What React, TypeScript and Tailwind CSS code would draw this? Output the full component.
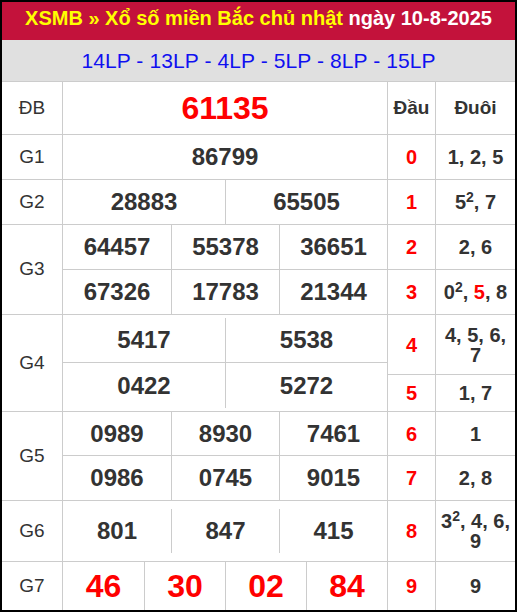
import React from 'react'

// bảng kết quả xổ số miền Bắc
const line = 'border-[#cccccc]'
const cell = `border-r border-b ${line}`

const Label = ({ text, span }: { text: string; span?: boolean }) => (
  <div className={`${cell} ${span ? 'row-span-2' : ''} flex items-center justify-center text-[19px] text-[#333]`}>
    {text}
  </div>
)

const Head = ({ d }: { d: string }) => (
  <div className={`${cell} flex items-center justify-center text-[20px] font-bold text-[#ff0000]`}>{d}</div>
)

const Tail = ({ children, last }: { children: React.ReactNode; last?: boolean }) => (
  <div className={`${last ? '' : 'border-b'} ${line} flex items-center justify-center px-[4px] text-center text-[20px] font-bold leading-[20px] text-[#333]`}>
    <span>{children}</span>
  </div>
)

const Sq = () => <sup className="text-[14px]">2</sup>

export default function App() {
  return (
    <div className="w-[517px] h-[612px] border-2 border-black bg-white font-['Liberation_Sans',Arial,sans-serif]">
      {/* tiêu đề */}
      <div className="h-[38px] bg-[#c3123b] pt-[4px] text-center text-[20px] font-bold leading-[24px]">
        <span className="text-[#ffff00]">XSMB » Xổ số miền Bắc chủ nhật</span>{' '}
        <span className="text-white">ngày 10-8-2025</span>
      </div>
      <div className="h-[41px] bg-[#e0e0e0] flex items-center justify-center text-[21px] tracking-[0.1px] text-[#1010f0]">
        14LP - 13LP - 4LP - 5LP - 8LP - 15LP
      </div>

      <div
        className={`grid grid-cols-[61px_325px_48px_79px] grid-rows-[53px_45px_45px_45px_45px_60px_37px_44px_45px_61px_48px] border-t ${line} text-[#333]`}
      >
        {/* ĐB */}
        <Label text="ĐB" />
        <div className={`${cell} flex items-center justify-center text-[32px] font-bold text-[#ff0000]`}>61135</div>
        <div className={`${cell} flex items-center justify-center text-[19px] font-bold`}>Đầu</div>
        <div className={`border-b ${line} flex items-center justify-center text-[19px] font-bold`}>Đuôi</div>

        {/* G1 */}
        <Label text="G1" />
        <div className={`${cell} flex items-center justify-center text-[24px] font-bold`}>86799</div>
        <Head d="0" />
        <Tail>1, 2, 5</Tail>

        {/* G2 */}
        <Label text="G2" />
        <div className={`${cell} grid grid-cols-2 text-[24px] font-bold`}>
          <div className="flex items-center justify-center">28883</div>
          <div className={`border-l ${line} flex items-center justify-center`}>65505</div>
        </div>
        <Head d="1" />
        <Tail>5<Sq />, 7</Tail>

        {/* G3 */}
        <Label text="G3" span />
        <div className={`${cell} row-span-2 grid grid-cols-3 grid-rows-[45px_1fr] text-[24px] font-bold`}>
          {['64457', '55378', '36651', '67326', '17783', '21344'].map((n, i) => (
            <div
              key={n}
              className={`${i % 3 ? 'border-l' : ''} ${i < 3 ? 'border-b' : ''} ${line} flex items-center justify-center`}
            >
              {n}
            </div>
          ))}
        </div>
        <Head d="2" />
        <Tail>2, 6</Tail>
        <Head d="3" />
        <Tail>
          0<Sq />, <span className="text-[#ff0000]">5</span>, 8
        </Tail>

        {/* G4 */}
        <Label text="G4" span />
        <div className={`${cell} row-span-2 py-[3px]`}>
          <div className="h-full grid grid-cols-2 grid-rows-2 text-[24px] font-bold">
            {['5417', '5538', '0422', '5272'].map((n, i) => (
              <div
                key={n}
                className={`${i % 2 ? 'border-l' : ''} ${i < 2 ? 'border-b' : ''} ${line} flex items-center justify-center`}
              >
                {n}
              </div>
            ))}
          </div>
        </div>
        <Head d="4" />
        <Tail>4, 5, 6, 7</Tail>
        <Head d="5" />
        <Tail>1, 7</Tail>

        {/* G5 */}
        <Label text="G5" span />
        <div className={`${cell} row-span-2 grid grid-cols-3 grid-rows-[44px_1fr] text-[24px] font-bold`}>
          {['0989', '8930', '7461', '0986', '0745', '9015'].map((n, i) => (
            <div
              key={n}
              className={`${i % 3 ? 'border-l' : ''} ${i < 3 ? 'border-b' : ''} ${line} flex items-center justify-center`}
            >
              {n}
            </div>
          ))}
        </div>
        <Head d="6" />
        <Tail>1</Tail>
        <Head d="7" />
        <Tail>2, 8</Tail>

        {/* G6 */}
        <Label text="G6" />
        <div className={`${cell} py-[8px]`}>
          <div className="h-full grid grid-cols-3 text-[24px] font-bold">
            {['801', '847', '415'].map((n, i) => (
              <div key={n} className={`${i ? 'border-l' : ''} ${line} flex items-center justify-center`}>
                {n}
              </div>
            ))}
          </div>
        </div>
        <Head d="8" />
        <Tail>
          3<Sq />, 4, 6, 9
        </Tail>

        {/* G7 */}
        <div className={`border-r ${line} flex items-center justify-center text-[19px]`}>G7</div>
        <div className={`border-r ${line} grid grid-cols-4 text-[32px] font-bold text-[#ff0000]`}>
          {['46', '30', '02', '84'].map((n, i) => (
            <div key={n} className={`${i ? 'border-l' : ''} ${line} flex items-center justify-center`}>
              {n}
            </div>
          ))}
        </div>
        <div className={`border-r ${line} flex items-center justify-center text-[20px] font-bold text-[#ff0000]`}>9</div>
        <Tail last>9</Tail>
      </div>
    </div>
  )
}
